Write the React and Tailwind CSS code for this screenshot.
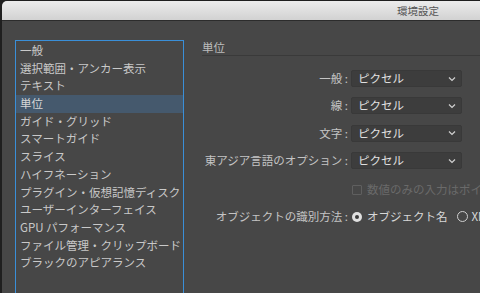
import React from 'react'

const items = [
  '一般',
  '選択範囲・アンカー表示',
  'テキスト',
  '単位',
  'ガイド・グリッド',
  'スマートガイド',
  'スライス',
  'ハイフネーション',
  'プラグイン・仮想記憶ディスク',
  'ユーザーインターフェイス',
  'GPU パフォーマンス',
  'ファイル管理・クリップボード',
  'ブラックのアピアランス',
]

const unitRows = ['一般', '線', '文字', '東アジア言語のオプション']

const Chevron = () => (
  <svg width="8" height="6" viewBox="0 0 8 6" className="shrink-0">
    <path d="M1 1.5 L4 4.5 L7 1.5" fill="none" stroke="#d0d0d0" strokeWidth="1.2" />
  </svg>
)

const Select = ({ value }) => (
  <div className="ml-[3px] w-[111px] h-[17px] flex items-center justify-between pl-[6px] pr-[5px] rounded-[2px] bg-[#3d3d3d] border border-[#393939] text-[#e0e0e0]">
    <span>{value}</span>
    <Chevron />
  </div>
)

const App = () => {
  const selected = 3

  return (
    <div className="w-[480px] h-[293px] overflow-hidden bg-[#1f1f1f] pl-[2px] pt-[1px] font-['Noto_Sans_CJK_JP','Noto_Sans',sans-serif] text-[11.5px]">
      <div className="h-full flex flex-col bg-[#474747] rounded-tl-[5px] overflow-hidden">
        {/* title bar */}
        <div className="h-[20px] shrink-0 flex items-center bg-gradient-to-b from-[#ececec] to-[#d2d2d2] border-b border-[#2c2c2c]">
          <span className="ml-[395px] text-[10.5px] text-[#555]">環境設定</span>
        </div>

        <div className="flex flex-1 pt-[19px] pl-[13px] min-h-0">
          {/* category list */}
          <div className="w-[169px] h-[280px] shrink-0 border border-[#3a8fd8] pt-[1px]">
            {items.map((item, i) => (
              <div
                key={item}
                className={`h-[17.7px] leading-[17.7px] pl-[4px] whitespace-nowrap ${
                  i === selected ? 'bg-[#45596d] text-[#d6d6d6]' : 'text-[#c9c9c9]'
                }`}
              >
                {item}
              </div>
            ))}
          </div>

          {/* unit panel */}
          <div className="ml-[18px] flex-1 min-w-0 overflow-hidden whitespace-nowrap">
            <div className="h-[16px] leading-[15px] border-b border-[#3a3a3a] text-[#bcbcbc]">単位</div>

            <div className="mt-[14px] flex flex-col gap-[10.4px]">
              {unitRows.map((label) => (
                <div key={label} className="flex items-center h-[17px]">
                  <div className="w-[146px] text-right text-[#c4c4c4]">{label} :</div>
                  <Select value="ピクセル" />
                </div>
              ))}
            </div>

            <div className="mt-[12px] flex items-center h-[17px]">
              <div className="w-[150px] shrink-0" />
              <div className="w-[10px] h-[10px] border border-[#5f5f5f] rounded-[1px] shrink-0" />
              <span className="ml-[5px] text-[#6a6a6a]">数値のみの入力はポイント</span>
            </div>

            <div className="mt-[10px] flex items-center h-[17px]">
              <div className="w-[146px] shrink-0 text-right text-[#c4c4c4]">オブジェクトの識別方法 :</div>
              <div className="ml-[4px] w-[10px] h-[10px] rounded-full bg-[#e0e0e0] flex items-center justify-center shrink-0">
                <div className="w-[4px] h-[4px] rounded-full bg-[#3a3a3a]" />
              </div>
              <span className="ml-[5px] text-[#d8d8d8]">オブジェクト名</span>
              <div className="ml-[9px] w-[11px] h-[11px] rounded-full border border-[#cfcfcf] shrink-0" />
              <span className="ml-[4px] text-[#d8d8d8]">XML ID</span>
            </div>
          </div>
        </div>
      </div>
    </div>
  )
}

export default App
